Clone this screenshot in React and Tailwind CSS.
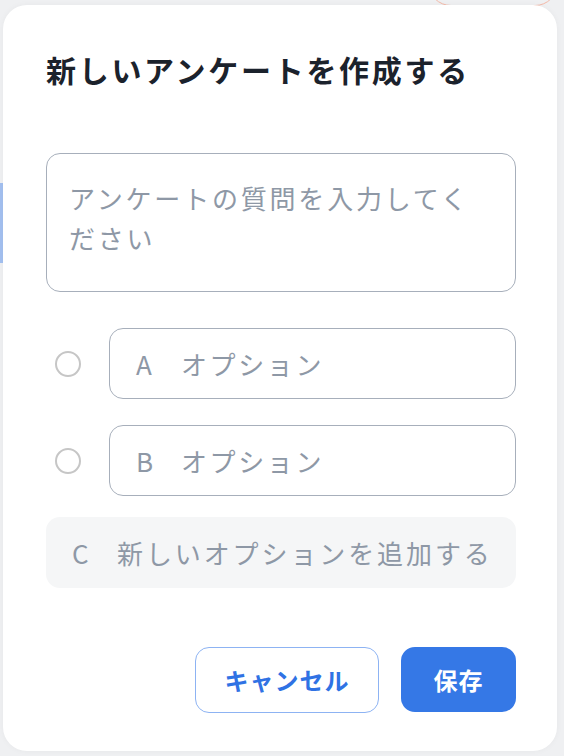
export default function App() {
  const options = ["A", "B"];

  return (
    <div
      className="relative w-[564px] h-[756px] overflow-hidden bg-[#eff0f2]"
      style={{ fontFamily: '"Noto Sans CJK JP", "Noto Sans", sans-serif' }}
    >
      {/* page peeking out behind the dialog */}
      <div className="absolute left-0 top-[183px] w-[4px] h-[80px] bg-[#a3c0f0]" />
      <div className="absolute right-[6px] top-[-40px] w-[130px] h-[46px] rounded-full border border-[#f4b9a8]" />

      <div className="relative ml-[3px] mt-[5px] w-[554px] h-[746px] rounded-[24px] bg-white pt-[46px] pl-[43px] pr-[41px] pb-[38px] flex flex-col shadow-[0_0_6px_rgba(0,0,0,0.04)]">
        <h2 className="text-[30px] leading-[36px] font-bold tracking-[2.7px] text-[#1b222c]">
          新しいアンケートを作成する
        </h2>

        <textarea
          className="mt-[66px] w-[470px] h-[139px] resize-none rounded-[14px] border border-[#a7afbb] pt-[24px] pl-[22px] pr-[34px] text-[26px] leading-[40px] tracking-[2.8px] text-[#1e2630] placeholder:text-[#8e98a6] outline-none"
          placeholder="アンケートの質問を入力してください"
        />

        <div className="mt-[36px] flex flex-col gap-[26px]">
          {options.map((label) => (
            <div key={label} className="flex items-center">
              <span className="ml-[9px] w-[26px] h-[26px] rounded-full border-2 border-[#c6c6c6] shrink-0" />
              <div className="ml-[28px] w-[407px] h-[71px] rounded-[14px] border border-[#a7afbb] flex items-center pl-[26px] text-[26px] tracking-[2.6px] text-[#8e98a6]">
                <span className="w-[45px]">{label}</span>
                <span>オプション</span>
              </div>
            </div>
          ))}
        </div>

        <div className="mt-[21px] w-[470px] h-[71px] rounded-[14px] bg-[#f5f6f7] flex items-center pl-[26px] text-[26px] tracking-[2.9px] text-[#8e98a6]">
          <span className="w-[45px]">C</span>
          <span>新しいオプションを追加する</span>
        </div>

        <div className="mt-auto flex justify-end gap-[22px]">
          <button className="w-[184px] h-[66px] rounded-[14px] border border-[#8db3f3] bg-white text-[24px] font-bold text-[#2f72e4] tracking-[1px]">
            キャンセル
          </button>
          <button className="w-[115px] h-[65px] rounded-[14px] bg-[#3578e6] text-[24px] font-bold text-white tracking-[1px]">
            保存
          </button>
        </div>
      </div>
    </div>
  );
}
